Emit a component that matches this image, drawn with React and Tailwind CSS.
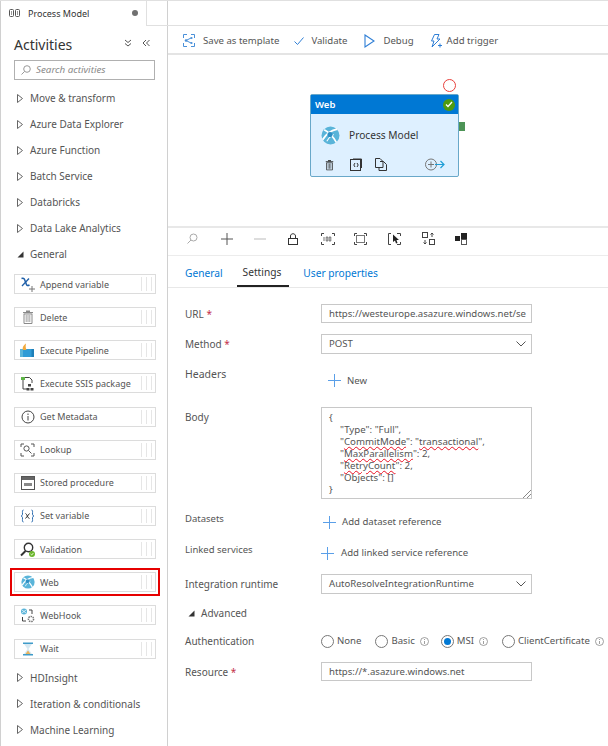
import React from "react";

const accordionTop = ["Move & transform", "Azure Data Explorer", "Azure Function", "Batch Service", "Databricks", "Data Lake Analytics"];
const accordionBottom = ["HDInsight", "Iteration & conditionals", "Machine Learning"];

const Svg = ({ w = 16, h = 16, vb, className = "", children }) => (
  <svg width={w} height={h} viewBox={vb || `0 0 ${w} ${h}`} fill="none" className={`shrink-0 ${className}`}>
    {children}
  </svg>
);

const WebIcon = ({ size = 18 }) => (
  <Svg w={size} h={size} vb="0 0 18 18">
    <circle cx="9" cy="9" r="8.5" fill="#59b4d9" />
    <path d="M1.5 13C5 7.5 9.5 4 15.5 3" stroke="#fff" strokeWidth="1.8" />
    <path d="M3 3.5C7 5.5 11.5 10 14.5 15.5" stroke="#fff" strokeWidth="1.6" />
    <path d="M5.5 14.5C7 11.5 9 9.5 12 8" stroke="#fff" strokeWidth="1" />
    <circle cx="8.5" cy="8" r="2.4" fill="#2f8fc4" />
  </Svg>
);

const TrashIcon = ({ color = "#7a7a7a", w = 12, h = 14 }) => (
  <Svg w={w} h={h} vb="0 0 12 14">
    <rect x="1" y="2" width="10" height="1.2" fill={color} />
    <rect x="4" y="0.5" width="4" height="1.6" fill={color} />
    <path d="M2 4H10V13.5H2Z" fill="none" stroke={color} />
    <path d="M4.2 5V12M6 5V12M7.8 5V12" stroke={color} strokeWidth="0.8" />
  </Svg>
);

const icons = {
  append: (
    <Svg w={16} h={16}>
      <path d="M1.5 2.5C4 1.5 4.5 3 5.5 6C6.5 9 7 10.5 9.5 9" stroke="#1f5fa8" strokeWidth="1.5" />
      <path d="M9 2.5L2 10" stroke="#1f5fa8" strokeWidth="1.3" />
      <path d="M9 13H15M12 10V16" stroke="#777" />
    </Svg>
  ),
  delete: <TrashIcon color="#8a8a8a" />,
  pipeline: (
    <Svg w={15} h={15}>
      <path d="M0 6H14V14H0Z" fill="#2f9bd6" />
      <path d="M0 6H3V14H0Z" fill="#59b4d9" />
      <path d="M3 7C2 4 4 2 6 0.5C5.5 3 5.5 4.5 6.5 7Z" fill="#f2a93b" />
      <path d="M11.5 6H14V14H11.5Z" fill="#1f7fb8" />
    </Svg>
  ),
  ssis: (
    <Svg w={15} h={15}>
      <rect x="1" y="1" width="4" height="3" fill="#5fb548" />
      <path d="M3 4V13H7M5 1.5H9.5L12 4V7" stroke="#444" />
      <rect x="8" y="8" width="3" height="2.5" fill="#444" />
      <rect x="6.5" y="12" width="3" height="2.5" fill="#444" />
      <rect x="10.5" y="12" width="3" height="2.5" fill="#444" />
    </Svg>
  ),
  metadata: (
    <Svg w={14} h={14}>
      <circle cx="7" cy="7" r="6" stroke="#444" />
      <path d="M7 6V10.5M7 3.5V5" stroke="#444" />
    </Svg>
  ),
  lookup: (
    <Svg w={15} h={14}>
      <path d="M1 4V1H4M11 1H14V4M1 10V13H4M11 13H14V10" stroke="#555" />
      <circle cx="6.5" cy="5.5" r="2.6" stroke="#555" />
      <path d="M8.5 7.5L11.5 10.5" stroke="#555" />
    </Svg>
  ),
  stored: (
    <Svg w={14} h={14}>
      <rect x="0.5" y="0.5" width="13" height="13" stroke="#555" />
      <rect x="1" y="1" width="12" height="3" fill="#666" />
      <rect x="3" y="7" width="8" height="3" fill="#888" />
    </Svg>
  ),
  setvar: (
    <Svg w={15} h={14}>
      <path d="M3.5 1C2 1 2.5 3 2.5 5C2.5 6 2 7 1 7C2 7 2.5 8 2.5 9C2.5 11 2 13 3.5 13" stroke="#2b6cb0" />
      <path d="M11.5 1C13 1 12.5 3 12.5 5C12.5 6 13 7 14 7C13 7 12.5 8 12.5 9C12.5 11 13 13 11.5 13" stroke="#2b6cb0" />
      <path d="M5.5 4.5C7 4.5 7.5 9.5 9.5 9.5M9.5 4.5L5.5 9.5" stroke="#333" />
    </Svg>
  ),
  validation: (
    <Svg w={16} h={15}>
      <circle cx="8.5" cy="5.5" r="4.2" stroke="#333" strokeWidth="1.4" />
      <path d="M5.5 9L1 13.5" stroke="#333" strokeWidth="2" />
      <circle cx="12" cy="12" r="3" fill="#6bb62c" />
      <path d="M10.6 12L11.7 13L13.4 11" stroke="#fff" strokeWidth="0.8" />
    </Svg>
  ),
  web: <WebIcon size={14} />,
  webhook: (
    <Svg w={15} h={15}>
      <circle cx="4" cy="3.5" r="3" fill="#59b4d9" />
      <path d="M2 2L6 5M6 2L2 5" stroke="#fff" strokeWidth="0.7" />
      <circle cx="11" cy="11" r="2.6" stroke="#777" strokeWidth="1.5" strokeDasharray="1.5 0.8" />
      <path d="M9 2H12V6M2.5 9V13H6" stroke="#444" />
    </Svg>
  ),
  wait: (
    <Svg w={12} h={14}>
      <path d="M1 0.5H11V2H1ZM1 12H11V13.5H1Z" fill="#3f9bc9" />
      <path d="M2 2H10L6.5 7L10 12H2L5.5 7Z" fill="#d8e9f2" />
      <path d="M3.5 12L6 8.5L8.5 12Z" fill="#e8b25a" />
    </Svg>
  ),
};

const activities = [
  ["Append variable", "append"],
  ["Delete", "delete"],
  ["Execute Pipeline", "pipeline"],
  ["Execute SSIS package", "ssis"],
  ["Get Metadata", "metadata"],
  ["Lookup", "lookup"],
  ["Stored procedure", "stored"],
  ["Set variable", "setvar"],
  ["Validation", "validation"],
  ["Web", "web"],
  ["WebHook", "webhook"],
  ["Wait", "wait"],
];

const Caret = ({ open }) =>
  open ? (
    <Svg w={7} h={7} className="mr-[6px]">
      <path d="M6.5 0.5V6.5H0.5Z" fill="#333" />
    </Svg>
  ) : (
    <Svg w={6} h={9} className="mr-[7px]">
      <path d="M0.5 0.5L5.5 4.5L0.5 8.5Z" stroke="#666" />
    </Svg>
  );

const AccordionRow = ({ label, open }) => (
  <div className="h-[26px] shrink-0 flex items-center pl-[16px] text-[10px] text-[#555]">
    <Caret open={open} />
    <span>{label}</span>
  </div>
);

const ActivityRow = ({ label, icon, selected }) => (
  <div
    className={`h-[20px] w-[142px] shrink-0 ml-[13px] mb-[13.15px] flex items-center border border-[#dcdcdc] bg-white ${
      selected ? "outline-2 outline-[#e60000] outline-offset-[2px]" : ""
    }`}
  >
    <div className="w-[25px] flex items-center justify-center">{icons[icon]}</div>
    <span className="text-[9px] text-[#555]">{label}</span>
    <div className="ml-auto mr-[3px] flex gap-[4px] h-[14px]">
      <div className="w-px bg-[#e6e6e6]" />
      <div className="w-px bg-[#e6e6e6]" />
      <div className="w-px bg-[#e6e6e6]" />
    </div>
  </div>
);

const Sidebar = () => (
  <aside className="w-[168px] h-full shrink-0 border-l border-r border-l-[#d0d0d0] border-r-[#d0d0d0] flex flex-col overflow-hidden">
    <div className="h-[26px] w-[146px] shrink-0 flex items-center border-r border-[#e0e0e0] pl-[8px] pr-[8px] -mt-px">
      <Svg w={11} h={8} className="mr-[8px]">
        <rect x="0.5" y="0.5" width="4" height="7" rx="1" stroke="#555" />
        <rect x="6.5" y="0.5" width="4" height="7" rx="1" stroke="#555" />
        <path d="M2.5 2V6M8.5 2V6" stroke="#999" />
      </Svg>
      <span className="text-[9px] text-[#333]">Process Model</span>
      <div className="ml-auto w-[6px] h-[6px] rounded-full bg-[#707070]" />
    </div>
    <div className="h-[34px] shrink-0 flex items-end pl-[13px] pr-[17px] justify-between">
      <span className="text-[14px] leading-[21px] text-[#333] mb-[5px]">Activities</span>
      <div className="flex gap-[10px] mb-[13px]">
        <Svg w={8} h={8}>
          <path d="M1 1L4 3.5L7 1M1 4.5L4 7L7 4.5" stroke="#555" />
        </Svg>
        <Svg w={8} h={8}>
          <path d="M4 1L1 4L4 7M7.5 1L4.5 4L7.5 7" stroke="#555" />
        </Svg>
      </div>
    </div>
    <div className="h-[20px] shrink-0 ml-[13px] mr-[12px] mb-[5px] border border-[#b0b0b0] flex items-center pl-[6px]">
      <Svg w={10} h={10} className="mr-[5px]">
        <circle cx="6" cy="4" r="3.3" stroke="#999" />
        <path d="M3.5 6.5L0.5 9.5" stroke="#999" />
      </Svg>
      <span className="italic text-[9.8px] text-[#8a8a8a]">Search activities</span>
    </div>
    {accordionTop.map((label) => (
      <AccordionRow key={label} label={label} />
    ))}
    <AccordionRow label="General" open />
    <div className="h-[7px] shrink-0" />
    {activities.map(([label, icon]) => (
      <ActivityRow key={label} label={label} icon={icon} selected={label === "Web"} />
    ))}
    <div className="-mt-[7px]">
      {accordionBottom.map((label) => (
        <AccordionRow key={label} label={label} />
      ))}
    </div>
  </aside>
);

const ToolbarButton = ({ icon, label, className = "" }) => (
  <div className={`flex items-center ${className}`}>
    {icon}
    <span className="text-[9.6px] text-[#555]">{label}</span>
  </div>
);

const TopToolbar = () => (
  <div className="h-[29px] shrink-0 border-b-2 border-[#e4e4e4] flex items-center pl-[15px] pt-[2px]">
    <ToolbarButton
      className="mr-[15px]"
      label="Save as template"
      icon={
        <Svg w={12} h={13} className="mr-[8px]">
          <path d="M4 0.5H0.5V4M8 0.5H11.5V4M4 12.5H0.5V9M8 12.5H11.5V9" stroke="#4a90d9" />
          <path d="M3 6.5L8 4M3 6.5L8 9" stroke="#4a90d9" />
          <circle cx="3" cy="6.5" r="1.3" fill="#4a90d9" />
          <circle cx="8.5" cy="4" r="1.1" fill="#4a90d9" />
          <circle cx="8.5" cy="9" r="1.1" fill="#4a90d9" />
        </Svg>
      }
    />
    <ToolbarButton
      className="mr-[17px]"
      label="Validate"
      icon={
        <Svg w={10} h={8} className="mr-[7px]">
          <path d="M0.5 4.5L3.5 7.5L9.5 0.5" stroke="#2f7fd6" />
        </Svg>
      }
    />
    <ToolbarButton
      className="mr-[16px]"
      label="Debug"
      icon={
        <Svg w={11} h={14} className="mr-[8px]">
          <path d="M1 1L10 7L1 13Z" stroke="#2f7fd6" strokeWidth="1.1" />
        </Svg>
      }
    />
    <ToolbarButton
      label="Add trigger"
      icon={
        <Svg w={12} h={14} className="mr-[5px]">
          <path d="M4.5 0.5H9L7 5H10L2 13L4 7H1.5Z" stroke="#2f7fd6" />
          <path d="M8 11.5H12M10 9.5V13.5" stroke="#2f7fd6" />
        </Svg>
      }
    />
  </div>
);

const Canvas = () => (
  <div className="h-[171px] shrink-0 relative">
    <div className="absolute left-[275px] top-[24px] w-[13px] h-[13px] rounded-full border border-[#e8413c] bg-white" />
    <div className="absolute left-[290px] top-[67px] w-[7px] h-[9px] bg-[#4d9456]" />
    <div className="absolute left-[142px] top-[39px] w-[149px] h-[83px] bg-[#def0ff] border border-[#69a8c9] rounded-[2px] flex flex-col">
      <div className="h-[19px] bg-[#0078d4] flex items-center pl-[4px] pr-[3px] justify-between">
        <span className="text-white font-semibold">Web</span>
        <div className="w-[12px] h-[12px] rounded-full bg-[#4f9a0f] flex items-center justify-center">
          <Svg w={8} h={7}>
            <path d="M1 3.5L3 5.5L7 1" stroke="#fff" strokeWidth="1.3" />
          </Svg>
        </div>
      </div>
      <div className="flex items-center pl-[10px] mt-[12px]">
        <WebIcon size={19} />
        <span className="ml-[9px] text-[10.2px] text-[#333]">Process Model</span>
      </div>
      <div className="flex items-center pl-[14px] mt-[13px]">
        <TrashIcon color="#333" w={9} h={12} />
        <Svg w={12} h={13} className="ml-[16px]">
          <rect x="0.5" y="1.5" width="10" height="11" stroke="#333" />
          <path d="M3 1H11.5V10" stroke="#333" />
          <path d="M5 5L3.8 7L5 9M7 5L8.2 7L7 9" stroke="#333" />
        </Svg>
        <Svg w={12} h={13} className="ml-[13px]">
          <path d="M0.5 0.5H5L8 3.5V9.5H0.5Z" stroke="#333" />
          <path d="M5 3.5H8.5L11.5 6.5V12.5H4V9.5" stroke="#333" />
        </Svg>
        <Svg w={20} h={13} className="ml-[38px]">
          <circle cx="6" cy="6.5" r="5.5" stroke="#777" />
          <path d="M3 6.5H9M6 3.5V9.5" stroke="#777" />
          <path d="M10 6.5H19M15.5 3L19 6.5L15.5 10" stroke="#1e9ed6" strokeWidth="1.2" />
        </Svg>
      </div>
    </div>
  </div>
);

const ZoomToolbar = () => (
  <div className="h-[30px] shrink-0 border-t-2 border-b border-t-[#e8e8e8] border-b-[#ececec] flex items-center pb-[6px]">
    <div className="w-[31px] flex justify-end pr-[1px]">
      <Svg w={11} h={11}>
        <circle cx="6.5" cy="4.5" r="3.5" stroke="#aaa" />
        <path d="M4 7L0.5 10.5" stroke="#aaa" />
      </Svg>
    </div>
    <Svg w={12} h={12} className="ml-[22px]">
      <path d="M0 6H12M6 0V12" stroke="#555" />
    </Svg>
    <Svg w={12} h={12} className="ml-[21px]">
      <path d="M0 6H12" stroke="#bbb" />
    </Svg>
    <Svg w={10} h={12} className="ml-[22px]">
      <rect x="0.5" y="5.5" width="9" height="6" stroke="#333" />
      <path d="M2.5 5.5V3C2.5 0 7.5 0 7.5 3V5.5" stroke="#333" />
    </Svg>
    <Svg w={14} h={12} className="ml-[23px]">
      <path d="M3 0.5H0.5V3M11 0.5H13.5V3M3 11.5H0.5V9M11 11.5H13.5V9" stroke="#444" />
      <path d="M3 4V8M5.2 4H6.8V8H5.2ZM8.2 4H9.8V8H8.2Z" stroke="#555" strokeWidth="0.8" />
    </Svg>
    <Svg w={13} h={12} className="ml-[19px]">
      <path d="M3 0.5H0.5V3M10 0.5H12.5V3M3 11.5H0.5V9M10 11.5H12.5V9" stroke="#444" />
      <rect x="2.5" y="2.5" width="8" height="7" stroke="#777" />
    </Svg>
    <Svg w={13} h={12} className="ml-[21px]">
      <path d="M3 0.5H0.5V11.5H3M9 11.5H12.5V9M9 0.5H12.5V3" stroke="#444" />
      <path d="M5 1.5L11 7H8.5L9.5 10L8 10.5L7 7.5L5 9Z" fill="#222" />
    </Svg>
    <Svg w={13} h={13} className="ml-[21px]">
      <rect x="0.5" y="0.5" width="5" height="5" stroke="#444" />
      <rect x="7.5" y="7.5" width="5" height="5" stroke="#444" />
      <path d="M10 5V1M8.5 2.5L10 1L11.5 2.5M3 8V12M1.5 10.5L3 12L4.5 10.5" stroke="#444" />
    </Svg>
    <Svg w={12} h={12} className="ml-[20px]">
      <rect x="0" y="3" width="5" height="5" fill="#222" />
      <rect x="6" y="0" width="6" height="6" fill="#222" />
      <rect x="6.5" y="6.5" width="5" height="5" stroke="#555" />
    </Svg>
  </div>
);

const Tabs = () => (
  <div className="h-[32px] shrink-0 border-b border-[#e8e8e8] flex items-end pl-[17px] -mb-px text-[10.2px]">
    <div className="h-[32px] flex items-center pt-[5px] text-[#0078d4] mr-[14px]">General</div>
    <div className="h-[32px] flex items-center pt-[5px] text-[#333] pl-[6px] pr-[8px] border-b-2 border-[#222] mr-[14px]">Settings</div>
    <div className="h-[32px] flex items-center pt-[5px] text-[#0078d4]">User properties</div>
  </div>
);

const Field = ({ children, className = "" }) => (
  <div className={`w-[211px] border border-[#c8c8c8] flex items-center pl-[7px] text-[9.6px] text-[#555] overflow-hidden whitespace-nowrap ${className}`}>
    {children}
  </div>
);

const Chevron = () => (
  <Svg w={10} h={6} className="ml-auto mr-[5px]">
    <path d="M0.5 0.5L5 5L9.5 0.5" stroke="#555" />
  </Svg>
);

const Label = ({ children, required, className = "text-[10px]" }) => (
  <div className={`w-[136px] shrink-0 text-[#555] ${className}`}>
    {children}
    {required && <span className="text-[#c4314b]"> *</span>}
  </div>
);

const Plus = ({ className = "" }) => (
  <Svg w={13} h={13} className={className}>
    <path d="M0 6.5H13M6.5 0V13" stroke="#5a9fe8" />
  </Svg>
);

const Squiggle = ({ children }) => (
  <span className="underline decoration-wavy decoration-[#e81123] decoration-[0.6px]">{children}</span>
);

const Radio = ({ label, checked, info, className = "" }) => (
  <div className={`flex items-center ${className}`}>
    <div className="w-[13px] h-[13px] rounded-full border border-[#777] flex items-center justify-center mr-[3px] bg-white">
      {checked && <div className="w-[7px] h-[7px] rounded-full bg-[#0078d4]" />}
    </div>
    <span className="text-[9.6px] text-[#555]">{label}</span>
    {info && (
      <Svg w={9} h={9} className="ml-[5px]">
        <circle cx="4.5" cy="4.5" r="4" stroke="#888" strokeWidth="0.8" />
        <path d="M4.5 4V7M4.5 2V3" stroke="#888" strokeWidth="0.8" />
      </Svg>
    )}
  </div>
);

const Form = () => (
  <div className="pl-[17px] pt-[17px] flex flex-col">
    <div className="flex items-center">
      <Label required>URL</Label>
      <Field className="h-[19px]">https://westeurope.asazure.windows.net/se</Field>
    </div>
    <div className="flex items-center mt-[11px]">
      <Label required>Method</Label>
      <Field className="h-[20px]">
        POST
        <Chevron />
      </Field>
    </div>
    <div className="flex h-[53px]">
      <Label className="pt-[15px] text-[10.5px]">Headers</Label>
      <div className="flex items-center pl-[7px] text-[9.6px] text-[#555]">
        <Plus className="mr-[6px]" />
        New
      </div>
    </div>
    <div className="flex">
      <Label className="pt-[5px] text-[10px]">Body</Label>
      <div className="w-[211px] h-[92px] border border-[#c8c8c8] pl-[7px] pt-[4px] text-[9.7px] text-[#555] leading-[12px] relative">
        <div>{"{"}</div>
        <div className="pl-[11px]">"Type": "Full",</div>
        <div className="pl-[11px]">
          "<Squiggle>CommitMode</Squiggle>": "<Squiggle>transactional</Squiggle>",
        </div>
        <div className="pl-[11px]">
          "<Squiggle>MaxParallelism</Squiggle>": 2,
        </div>
        <div className="pl-[11px]">
          "<Squiggle>RetryCount</Squiggle>": 2,
        </div>
        <div className="pl-[11px]">"Objects": []</div>
        <div>{"}"}</div>
        <Svg w={8} h={8} className="absolute right-0 bottom-0">
          <path d="M0 8L8 0M4 8L8 4" stroke="#555" strokeWidth="0.7" />
        </Svg>
      </div>
    </div>
    <div className="flex h-[31px] mt-[16px]">
      <Label className="-mt-[1px] text-[9.5px]">Datasets</Label>
      <div className="flex items-center h-[14px] text-[9.6px] text-[#555]">
        <Plus className="mr-[6px] ml-[2px]" />
        Add dataset reference
      </div>
    </div>
    <div className="flex h-[28px]">
      <Label className="-mt-[1px] text-[9.5px]">Linked services</Label>
      <div className="flex items-center h-[14px] text-[9.6px] text-[#555]">
        <Plus className="mr-[7px]" />
        Add linked service reference
      </div>
    </div>
    <div className="flex items-center">
      <Label>Integration runtime</Label>
      <Field className="h-[20px]">
        AutoResolveIntegrationRuntime
        <Chevron />
      </Field>
    </div>
    <div className="flex items-center h-[14px] mt-[12px] pl-[3px] text-[10px] text-[#555]">
      <Caret open />
      Advanced
    </div>
    <div className="flex items-center h-[14px] mt-[14px]">
      <Label>Authentication</Label>
      <Radio label="None" className="mr-[14px]" />
      <Radio label="Basic" info className="mr-[12px]" />
      <Radio label="MSI" checked info className="mr-[14px]" />
      <Radio label="ClientCertificate" info />
    </div>
    <div className="flex items-center mt-[14px]">
      <Label required>Resource</Label>
      <Field className="h-[19px]">https://*.asazure.windows.net</Field>
    </div>
  </div>
);

export default function App() {
  return (
    <div className="w-[608px] h-[746px] flex overflow-hidden bg-white border-t border-[#e0e0e0] font-['Noto_Sans',sans-serif] text-[9.5px] leading-none">
      <Sidebar />
      <main className="flex-1 min-w-0 flex flex-col">
        <div className="h-[25px] shrink-0 -ml-[22px] border-b border-[#e0e0e0]" />
        <TopToolbar />
        <Canvas />
        <ZoomToolbar />
        <Tabs />
        <Form />
      </main>
    </div>
  );
}
